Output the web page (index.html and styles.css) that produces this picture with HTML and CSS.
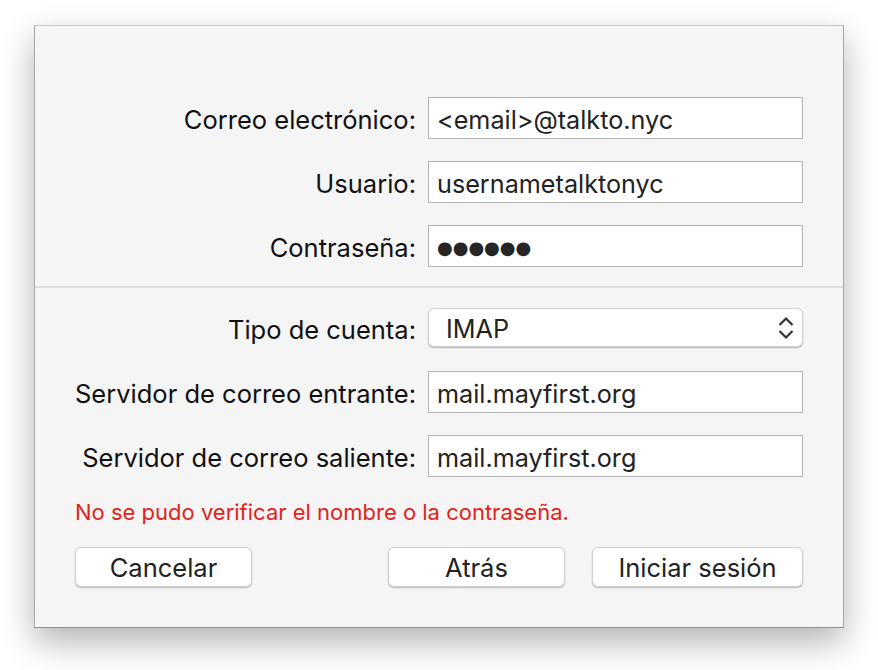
FILE: index.html
```html
<!DOCTYPE html>
<html lang="es">
<head>
<meta charset="utf-8">
<title>Cuenta</title>
<link rel="stylesheet" href="styles.css">
</head>
<body>
<div class="page">
<div class="dialog">
  <div class="form">
    <label class="label">Correo electrónico:</label>
    <div class="field">&lt;email&gt;@talkto.nyc</div>
    <label class="label">Usuario:</label>
    <div class="field">usernametalktonyc</div>
    <label class="label">Contraseña:</label>
    <div class="field dots">●●●●●●</div>
  </div>
  <div class="separator"></div>
  <div class="form lower">
    <label class="label">Tipo de cuenta:</label>
    <div class="popup">
      <span class="popup-text">IMAP</span>
      <svg class="chevrons" width="18" height="24" viewBox="0 0 18 24">
        <path d="M2.5 9 L9 2.5 L15.5 9" fill="none" stroke="#333" stroke-width="2.2"/>
        <path d="M2.5 15 L9 21.5 L15.5 15" fill="none" stroke="#333" stroke-width="2.2"/>
      </svg>
    </div>
    <label class="label label-gap">Servidor de correo entrante:</label>
    <div class="field field-gap">mail.mayfirst.org</div>
    <label class="label">Servidor de correo saliente:</label>
    <div class="field">mail.mayfirst.org</div>
  </div>
  <p class="error">No se pudo verificar el nombre o la contraseña.</p>
  <div class="buttons">
    <button class="btn btn-cancel">Cancelar</button>
    <div class="spacer"></div>
    <button class="btn btn-back">Atrás</button>
    <button class="btn btn-login">Iniciar sesión</button>
  </div>
</div>
</div>
</body>
</html>
```
FILE: styles.css
```css
html, body {
  margin: 0;
  padding: 0;
  background: #ffffff;
}
body {
  font-family: Inter, "Liberation Sans", sans-serif;
  color: #1a1a1a;
}
.page {
  box-sizing: border-box;
  min-height: 670px;
  padding: 25px 0 42px 34px;
}
.dialog {
  box-sizing: border-box;
  width: 810px;
  height: 603px;
  background: #f5f5f5;
  border: 1px solid #a8a8a8;
  border-top-color: #c8c8c8;
  border-bottom-color: #909090;
  box-shadow: 0 14px 32px rgba(0, 0, 0, 0.3);
  padding: 71px 40px 0 40px;
  display: flex;
  flex-direction: column;
}
.form {
  display: grid;
  grid-template-columns: 341px 375px;
  column-gap: 12px;
  row-gap: 22px;
}
.label {
  text-align: right;
  align-self: center;
  font-size: 25.5px;
  line-height: 30px;
  padding-top: 4px;
  color: #111;
  white-space: nowrap;
}
.field {
  box-sizing: border-box;
  height: 42px;
  background: #fff;
  border: 1px solid #b4b4b4;
  padding: 4px 8px 0 8px;
  display: flex;
  align-items: center;
  font-size: 25.2px;
  color: #222;
}
.dots {
  font-family: "DejaVu Sans", sans-serif;
  font-size: 18px;
  padding-top: 2px;
  color: #262626;
}
.separator {
  height: 2px;
  background: #dedede;
  margin: 19px -40px 20px -40px;
}
.field-gap, .label-gap {
  margin-top: 2px;
}
.popup {
  box-sizing: border-box;
  height: 39px;
  background: #fff;
  border-radius: 6px;
  border: 1px solid #d2d2d2;
  box-shadow: 0 1px 1.5px rgba(0, 0, 0, 0.28);
  display: flex;
  align-items: center;
  justify-content: space-between;
  padding: 0 7px 0 17px;
  font-size: 25.2px;
  color: #222;
}
.popup-text {
  padding-top: 2px;
}
.chevrons {
  display: block;
}
.error {
  margin: 22px 0 0 0;
  font-size: 22px;
  line-height: 26px;
  color: #e2231a;
}
.buttons {
  display: flex;
  margin-top: 22px;
  gap: 27px;
}
.spacer {
  flex: 1;
}
.btn {
  box-sizing: border-box;
  height: 40px;
  background: #fff;
  border: 1px solid #cfcfcf;
  border-radius: 6px;
  box-shadow: 0 1px 1.5px rgba(0, 0, 0, 0.25);
  font-family: Inter, "Liberation Sans", sans-serif;
  font-size: 25.5px;
  color: #222;
  padding: 0;
}
.btn-cancel, .btn-back {
  width: 177px;
}
.btn-login {
  width: 211px;
}
```
